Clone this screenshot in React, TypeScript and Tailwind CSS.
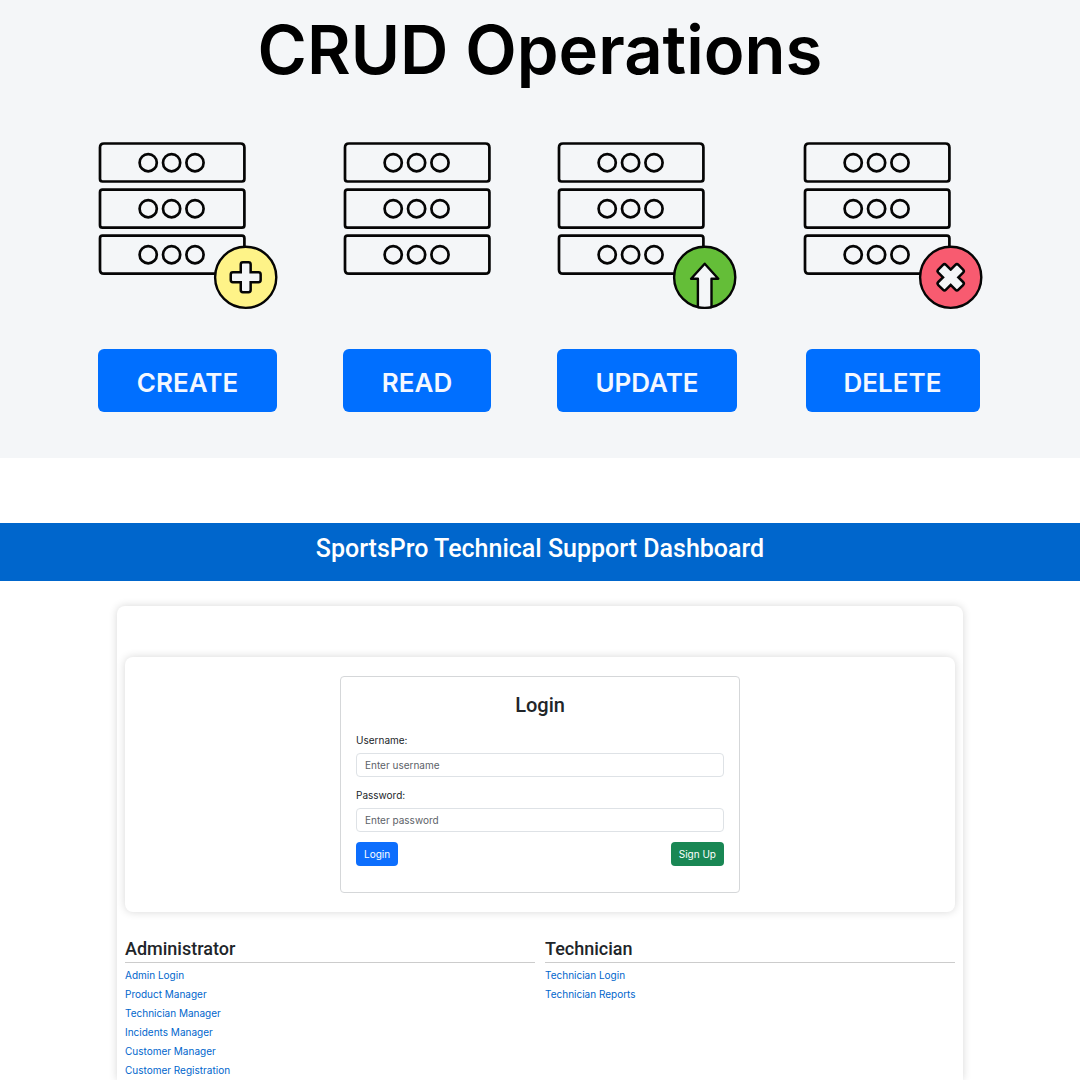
import React from "react";

type Badge = "create" | "update" | "delete";

const INK = "#050505";
const PAPER = "#f4f6f8";
const PLUS =
  "M-2.8 -12.8H2.8V-2.8H12.8V2.8H2.8V12.8H-2.8V2.8H-12.8V-2.8H-2.8Z";
const CROSS =
  "M-3.3 -12.1H3.3V-3.3H12.1V3.3H3.3V12.1H-3.3V3.3H-12.1V-3.3H-3.3Z";

function RoundedMark({ d, transform }: { d: string; transform?: string }) {
  return (
    <g transform={transform}>
      <path d={d} fill={INK} stroke={INK} strokeWidth="6.8" />
      <path d={d} fill={PAPER} stroke={PAPER} strokeWidth="1.8" />
    </g>
  );
}

function BadgeMark({ kind }: { kind: Badge }) {
  const fill = { create: "#fef388", update: "#64be38", delete: "#f85b70" }[kind];
  return (
    <g transform="translate(147.7 137.3)" stroke={INK} strokeWidth="2.4" strokeLinejoin="round">
      <circle r="30.6" fill={fill} />
      {kind === "create" && <RoundedMark d={PLUS} />}
      {kind === "delete" && <RoundedMark d={CROSS} transform="rotate(45)" />}
      {kind === "update" && (
        <>
          <path d="M-6.8 29.8V1.4H-13.6L0 -13.6L13.6 1.4H6.8V29.8" fill={PAPER} />
          <path d="M-6.8 29.8Q0 31.4 6.8 29.8" fill="none" />
        </>
      )}
    </g>
  );
}

function ServerStack({ badge }: { badge?: Badge }) {
  return (
    <svg
      width="179"
      height="170"
      viewBox="0 0 179 170"
      overflow="visible"
      aria-hidden="true"
      className="block shrink-0"
    >
      <g fill="none" stroke={INK} strokeWidth="2.7">
        <path d="M6 3.5H142.4Q146.4 3.5 146.4 7.5V39Q146.4 41.5 143.9 41.5H4.5Q2 41.5 2 39V7.5Q2 3.5 6 3.5Z" />
        <rect x="2" y="49.7" width="144.4" height="38" rx="2.5" />
        <path d="M4.5 95.7H143.9Q146.4 95.7 146.4 98.2V129.7Q146.4 133.7 142.4 133.7H6Q2 133.7 2 129.7V98.2Q2 95.7 4.5 95.7Z" />
        {[22.7, 68.7, 114.7].map((y) =>
          [50.2, 73.6, 97].map((x) => <circle key={`${x}-${y}`} cx={x} cy={y} r="8.6" />)
        )}
      </g>
      {badge && <BadgeMark kind={badge} />}
    </svg>
  );
}

const operations: { label: string; badge?: Badge; col: string; button: string }[] = [
  { label: "CREATE", badge: "create", col: "w-[179px]", button: "w-full" },
  { label: "READ", col: "w-[148px]", button: "w-full" },
  { label: "UPDATE", badge: "update", col: "w-[180px]", button: "w-full" },
  { label: "DELETE", badge: "delete", col: "w-[179px]", button: "w-[174px]" },
];

function Field({ id, label, type, placeholder }: { id: string; label: string; type: string; placeholder: string }) {
  return (
    <div className="mb-[10px]">
      <label htmlFor={id} className="mb-1 block text-[10px] leading-[17px] text-[#212529]">
        {label}
      </label>
      <input
        id={id}
        type={type}
        placeholder={placeholder}
        className="block h-6 w-full rounded border border-[#dee2e6] bg-white px-2 text-[10px] text-[#212529] placeholder:text-[#5c6268]"
      />
    </div>
  );
}

function LinkColumn({ title, links }: { title: string; links: string[] }) {
  return (
    <section>
      <h2 className="border-b border-[#cccccc] pb-px pt-px font-['Roboto',sans-serif] text-[18px] font-medium leading-6 text-[#212529]">
        {title}
      </h2>
      <ul className="mt-[3px]">
        {links.map((l) => (
          <li key={l} className="text-[10px] leading-[19px]">
            <a href="#" className="text-[#0066cc]">
              {l}
            </a>
          </li>
        ))}
      </ul>
    </section>
  );
}

export default function App() {
  return (
    <div className="flex min-h-screen flex-col overflow-hidden bg-white font-['Inter',sans-serif]">
      <section className="bg-[#f4f6f8] pb-[46px] pt-2">
        <h1 className="text-center text-[67px] font-semibold leading-[84px] text-black">CRUD Operations</h1>
        <div className="mt-12 flex justify-center gap-[66px]">
          {operations.map((op) => (
            <div key={op.label} className={`flex flex-col items-start ${op.col}`}>
              <ServerStack badge={op.badge} />
              <button
                type="button"
                className={`mt-[39px] h-[63px] self-center rounded-md bg-[#006fff] pt-[3px] text-[26px] font-semibold text-[#f4f8ff] ${op.button}`}
              >
                {op.label}
              </button>
            </div>
          ))}
        </div>
      </section>

      <header className="mt-[65px] bg-[#0066cc] pb-4 pt-[10px]">
        <h1 className="text-center font-['Roboto',sans-serif] text-[25px] font-medium leading-8 text-white">
          SportsPro Technical Support Dashboard
        </h1>
      </header>

      <main className="mx-auto mt-[25px] w-full max-w-[846px] flex-1 rounded-t-lg bg-white px-2 pt-[51px] shadow-[0_0_8px_rgba(0,0,0,0.16)]">
        <div className="rounded-lg bg-white py-[19px] shadow-[0_0_8px_rgba(0,0,0,0.16)]">
          <form
            onSubmit={(e) => e.preventDefault()}
            className="mx-auto w-full max-w-[400px] rounded border border-[#d5d7d9] px-[15px] pb-[26px] pt-4"
          >
            <h2 className="mb-[15px] text-center font-['Roboto',sans-serif] text-[20px] font-medium leading-6 text-[#212529]">
              Login
            </h2>
            <Field id="username" label="Username:" type="text" placeholder="Enter username" />
            <Field id="password" label="Password:" type="password" placeholder="Enter password" />
            <div className="flex justify-between">
              <button type="submit" className="h-6 rounded bg-[#0d6efd] px-2 text-[10px] text-white">
                Login
              </button>
              <button type="button" className="h-6 rounded bg-[#198754] px-2 text-[10px] text-white">
                Sign Up
              </button>
            </div>
          </form>
        </div>
        <div className="mt-6 grid grid-cols-2 gap-[10px]">
          <LinkColumn
            title="Administrator"
            links={[
              "Admin Login",
              "Product Manager",
              "Technician Manager",
              "Incidents Manager",
              "Customer Manager",
              "Customer Registration",
            ]}
          />
          <LinkColumn title="Technician" links={["Technician Login", "Technician Reports"]} />
        </div>
      </main>
    </div>
  );
}
